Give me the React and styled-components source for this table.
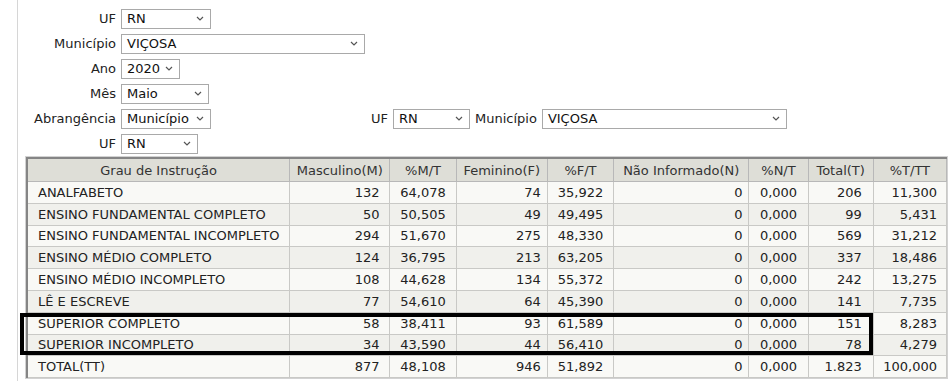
import React from 'react';
import styled, { createGlobalStyle } from 'styled-components';

const GlobalStyle = createGlobalStyle`
  html, body {
    margin: 0;
    padding: 0;
    background: #ffffff;
  }
  body {
    font-family: "DejaVu Sans", Verdana, sans-serif;
    font-size: 13px;
    color: #222;
  }
`;

const Page = styled.div`
  margin-left: 17px;
  border-left: 1px solid #d6d6d6;
  min-height: 381px;
  padding-top: 6px;
  overflow: hidden;
`;

const FilterForm = styled.div`
  display: flex;
  flex-direction: column;
`;

const FormRow = styled.div`
  display: flex;
  align-items: center;
  height: 25px;
`;

const Label = styled.span`
  width: ${(p) => (p.$inline ? 'auto' : '98px')};
  text-align: right;
  margin-right: ${(p) => (p.$inline ? '5px' : '5px')};
  margin-left: ${(p) => p.$offset || 0}px;
  white-space: nowrap;
`;

const SelectBox = styled.div`
  box-sizing: border-box;
  width: ${(p) => p.$width}px;
  height: 20px;
  border: 1px solid #a9a9a9;
  background: #fff;
  display: flex;
  align-items: center;
  justify-content: space-between;
  padding: 0 6px 0 5px;
  color: #111;
`;

const Chevron = () => (
  <svg width="8" height="5" viewBox="0 0 8 5">
    <path d="M1 1 L4 4 L7 1" fill="none" stroke="#555" strokeWidth="1.2" />
  </svg>
);

const Select = ({ value, width }) => (
  <SelectBox $width={width}>
    <span>{value}</span>
    <Chevron />
  </SelectBox>
);

const TableArea = styled.div`
  position: relative;
  margin-left: 7px;
`;

const Frame = styled.div`
  width: 923px;
  box-sizing: border-box;
  border: 1px solid #d2d2d2;
`;

const Table = styled.table`
  width: 921px;
  border-collapse: collapse;
  table-layout: fixed;
  border-top: 2px solid #858585;
  border-left: 2px solid #858585;
`;

const HeadCell = styled.th`
  background: #deded7;
  font-weight: normal;
  color: #333;
  height: 22px;
  padding: 0 4px;
  border: 1px solid #b8b8b8;
  white-space: nowrap;
`;

const Row = styled.tr`
  background: ${(p) => (p.$odd ? '#f9f9f6' : '#f0f0ec')};
`;

const Cell = styled.td`
  height: 20.8px;
  padding: 0 ${(p) => p.$pad}px 0 ${(p) => (p.$align === 'left' ? 10 : 4)}px;
  text-align: ${(p) => p.$align};
  border: 1px solid #c9c9c6;
  white-space: nowrap;
  color: #222;
`;

const Highlight = styled.div`
  position: absolute;
  left: -5px;
  top: 157px;
  width: 853px;
  height: 42px;
  box-sizing: border-box;
  border: 4px solid #000;
  pointer-events: none;
`;

const columns = [
  { title: 'Grau de Instrução', width: 262, align: 'left', pad: 4 },
  { title: 'Masculino(M)', width: 100, align: 'right', pad: 10 },
  { title: '%M/T', width: 66, align: 'center', pad: 4 },
  { title: 'Feminino(F)', width: 91, align: 'right', pad: 6 },
  { title: '%F/T', width: 66, align: 'center', pad: 4 },
  { title: 'Não Informado(N)', width: 135, align: 'right', pad: 6 },
  { title: '%N/T', width: 59, align: 'center', pad: 4 },
  { title: 'Total(T)', width: 65, align: 'right', pad: 11 },
  { title: '%T/TT', width: 73, align: 'right', pad: 9 },
];

const rows = [
  ['ANALFABETO', '132', '64,078', '74', '35,922', '0', '0,000', '206', '11,300'],
  ['ENSINO FUNDAMENTAL COMPLETO', '50', '50,505', '49', '49,495', '0', '0,000', '99', '5,431'],
  ['ENSINO FUNDAMENTAL INCOMPLETO', '294', '51,670', '275', '48,330', '0', '0,000', '569', '31,212'],
  ['ENSINO MÉDIO COMPLETO', '124', '36,795', '213', '63,205', '0', '0,000', '337', '18,486'],
  ['ENSINO MÉDIO INCOMPLETO', '108', '44,628', '134', '55,372', '0', '0,000', '242', '13,275'],
  ['LÊ E ESCREVE', '77', '54,610', '64', '45,390', '0', '0,000', '141', '7,735'],
  ['SUPERIOR COMPLETO', '58', '38,411', '93', '61,589', '0', '0,000', '151', '8,283'],
  ['SUPERIOR INCOMPLETO', '34', '43,590', '44', '56,410', '0', '0,000', '78', '4,279'],
  ['TOTAL(TT)', '877', '48,108', '946', '51,892', '0', '0,000', '1.823', '100,000'],
];

const App = () => {
  return (
    <>
      <GlobalStyle />
      <Page>
        <FilterForm>
          <FormRow>
            <Label>UF</Label>
            <Select value="RN" width={90} />
          </FormRow>
          <FormRow>
            <Label>Município</Label>
            <Select value="VIÇOSA" width={244} />
          </FormRow>
          <FormRow>
            <Label>Ano</Label>
            <Select value="2020" width={59} />
          </FormRow>
          <FormRow>
            <Label>Mês</Label>
            <Select value="Maio" width={88} />
          </FormRow>
          <FormRow>
            <Label>Abrangência</Label>
            <Select value="Município" width={90} />
            <Label $inline $offset={160}>UF</Label>
            <Select value="RN" width={77} />
            <Label $inline $offset={5}>Município</Label>
            <Select value="VIÇOSA" width={245} />
          </FormRow>
          <FormRow>
            <Label>UF</Label>
            <Select value="RN" width={77} />
          </FormRow>
        </FilterForm>

        <TableArea>
          <Frame>
            <Table>
              <colgroup>
                {columns.map((c) => (
                  <col key={c.title} style={{ width: c.width }} />
                ))}
              </colgroup>
              <thead>
                <tr>
                  {columns.map((c) => (
                    <HeadCell key={c.title}>{c.title}</HeadCell>
                  ))}
                </tr>
              </thead>
              <tbody>
                {rows.map((r, i) => (
                  <Row key={r[0]} $odd={i % 2 === 0}>
                    {r.map((v, j) => (
                      <Cell key={j} $align={columns[j].align} $pad={columns[j].pad}>
                        {v}
                      </Cell>
                    ))}
                  </Row>
                ))}
              </tbody>
            </Table>
          </Frame>
          <Highlight />
        </TableArea>
      </Page>
    </>
  );
};

export default App;
